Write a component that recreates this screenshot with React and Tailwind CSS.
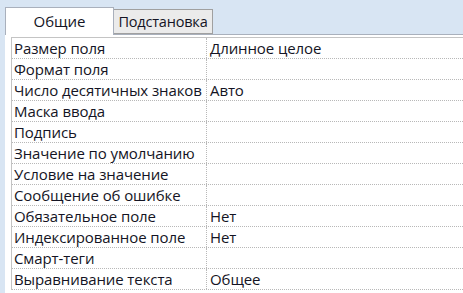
export default function App() {
  const rows = [
    ["Размер поля", "Длинное целое"],
    ["Формат поля", ""],
    ["Число десятичных знаков", "Авто"],
    ["Маска ввода", ""],
    ["Подпись", ""],
    ["Значение по умолчанию", ""],
    ["Условие на значение", ""],
    ["Сообщение об ошибке", ""],
    ["Обязательное поле", "Нет"],
    ["Индексированное поле", "Нет"],
    ["Смарт-теги", ""],
    ["Выравнивание текста", "Общее"],
  ];
  const font = { fontFamily: '"Open Sans", "Noto Sans", sans-serif' };
  return (
    <div className="w-[463px] h-[293px] overflow-hidden bg-[#d8e5f3] pl-[5px] pt-[7px] text-[#141424]" style={font}>
      <div className="flex items-end h-[28px]">
        <div className="w-[109px] h-[28px] bg-white border border-b-0 border-[#a9b0bc] flex items-center justify-center text-[15px] font-medium relative z-10">
          Общие
        </div>
        <div className="w-[99px] h-[25px] bg-[#ebebeb] border border-l-0 border-[#a0a0a0] flex items-center justify-center text-[14.5px] font-medium mb-[1px] tracking-[-0.2px]">
          Подстановка
        </div>
      </div>
      <div className="bg-white border-t border-[#a9b0bc] -mt-[1px] h-[260px] pl-[6px] pt-[2px]">
        <div className="border-l border-t border-[#c4c4c4] text-[15px] font-medium tracking-[-0.1px]">
          {rows.map(([k, v]) => (
            <div key={k} className="flex h-[21px] border-b border-dotted border-[#b8b8b8]">
              <div className="w-[195px] shrink-0 border-r border-dotted border-[#b8b8b8] pl-[2px] leading-[20px] whitespace-nowrap overflow-hidden">
                {k}
              </div>
              <div className="flex-1 pl-[3px] leading-[20px] whitespace-nowrap">{v}</div>
            </div>
          ))}
        </div>
      </div>
    </div>
  );
}
